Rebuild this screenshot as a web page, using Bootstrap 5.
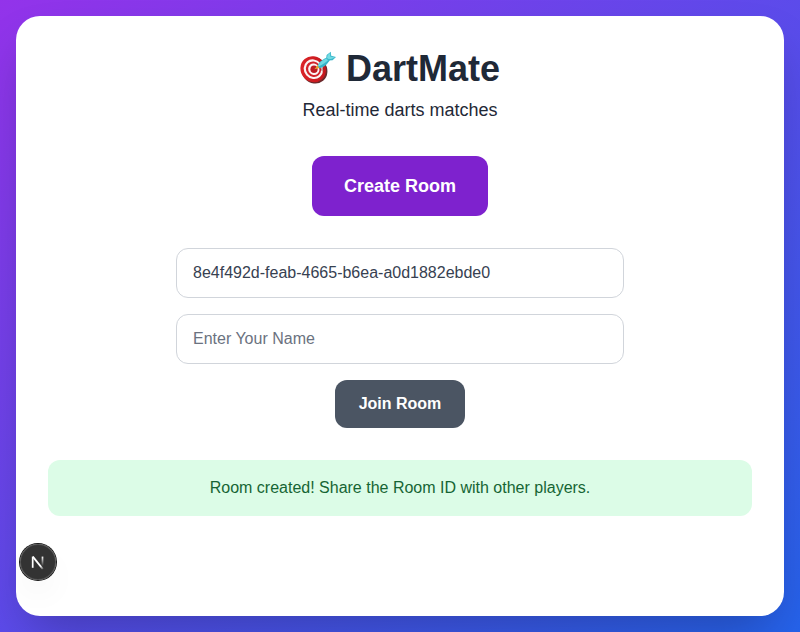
<!DOCTYPE html>
<html lang="en">
<head>
<meta charset="utf-8">
<meta name="viewport" content="width=device-width, initial-scale=1">
<title>DartMate</title>
<link href="https://cdn.jsdelivr.net/npm/bootstrap@5.3.0/dist/css/bootstrap.min.css" rel="stylesheet">
<style>
body { font-family: "Liberation Sans", Arial, sans-serif; color: #1f2937; }
.page { background: linear-gradient(to bottom right, #9333ea, #2563eb); }
.panel { border-radius: 24px; padding: 32px; box-shadow: 0 25px 50px -12px rgba(0,0,0,.25); }
.title { font-size: 36px; line-height: 40px; height: 40px; margin-bottom: 8px; }
.title svg { width: 36px; height: 36px; margin-right: 10px; }
.title span { padding-top: 1px; margin-bottom: -1px; }
.tagline { font-size: 18px; line-height: 28px; margin-bottom: 32px; }
.btn-create { --bs-btn-color: #fff; --bs-btn-bg: #7e22ce; --bs-btn-hover-color: #fff; --bs-btn-hover-bg: #6b21a8; border: 0; border-radius: 12px; padding: 16px 32px; font-size: 18px; line-height: 28px; margin-bottom: 32px; }
.join-form { width: 448px; gap: 16px; margin-bottom: 32px; }
.join-form .form-control { height: 50px; padding: 12px 16px; border-color: #d1d5db; border-radius: 12px; color: #374151; line-height: 24px; }
.join-form .form-control::placeholder { color: #6b7280; }
.btn-join { --bs-btn-color: #fff; --bs-btn-bg: #4b5563; --bs-btn-hover-color: #fff; --bs-btn-hover-bg: #374151; border: 0; border-radius: 12px; padding: 12px 24px; line-height: 24px; }
.notice { background: #dcfce7; color: #166534; border: 0; border-radius: 12px; padding: 16px; line-height: 24px; }
.dev-badge { left: 20px; bottom: 52px; width: 36px; height: 36px; background: rgba(0,0,0,.8); box-shadow: 0 0 0 1px #171717, inset 0 0 0 1px rgba(255,255,255,.14), 0 16px 32px -8px rgba(0,0,0,.1); }
</style>
</head>
<body>
<div class="page vh-100 p-3">
  <main class="panel bg-white h-100 d-flex flex-column align-items-center">
    <h1 class="title fw-bold d-flex align-items-center">
      <svg viewBox="0 0 36 36" aria-hidden="true">
        <defs>
          <linearGradient id="rim" x1="0" y1="0" x2="1" y2="1"><stop offset="0" stop-color="#e0262a"/><stop offset="1" stop-color="#c0141a"/></linearGradient>
        </defs>
        <ellipse cx="14.4" cy="20.4" rx="12.6" ry="13.6" transform="rotate(-40 14.4 20.4)" fill="#6b2a2c"/>
        <ellipse cx="13.2" cy="19.2" rx="12.4" ry="13.3" transform="rotate(-40 13.2 19.2)" fill="url(#rim)"/>
        <ellipse cx="13.4" cy="19.2" rx="9.4" ry="10.2" transform="rotate(-40 13.4 19.2)" fill="#fbf3f3"/>
        <ellipse cx="13.5" cy="19.2" rx="7.4" ry="8" transform="rotate(-40 13.5 19.2)" fill="#d2232a"/>
        <ellipse cx="13.8" cy="19.2" rx="5.5" ry="5.9" transform="rotate(-40 13.8 19.2)" fill="#fbf3f3"/>
        <ellipse cx="14" cy="19.2" rx="3.6" ry="3.8" fill="#bd1a22"/>
        <path d="M19 18.5 24.5 18 23 22Z" fill="#8c2525" opacity=".45"/>
        <path d="M14.3 19.2 18.8 14 21.6 17.4Z" fill="#e5a62c"/>
        <path d="M17.8 15.4C19 11.8 23.6 8.6 28 7L30 9.8C28 13.6 24 17.8 19.4 18.2Z" fill="#36b4c9"/>
        <path d="M18.3 15.2C20 11.9 24.5 9 28.4 7.6L29.3 9C26.4 12 22.6 14.7 18.6 16.6Z" fill="#6fd9e2"/>
        <path d="M26.2 8.4 26.6 5 30.8 1.8 31.2 5.8 36 7.1 32.6 10.3 28.2 10.4Z" fill="#3ab6ca"/>
        <path d="M27 8 27.6 5 30.3 2.8 30.2 6.6 35 7.4 31 9.1 28.5 9Z" fill="#73dbe3"/>
      </svg>
      <span>DartMate</span>
    </h1>
    <p class="tagline">Real-time darts matches</p>
    <button type="button" class="btn btn-create fw-bold">Create Room</button>
    <form class="join-form d-flex flex-column align-items-center">
      <input class="form-control" type="text" value="8e4f492d-feab-4665-b6ea-a0d1882ebde0" aria-label="Room ID">
      <input class="form-control" type="text" placeholder="Enter Your Name" aria-label="Your name">
      <button type="button" class="btn btn-join fw-bold">Join Room</button>
    </form>
    <div class="notice alert w-100 text-center" role="status">Room created! Share the Room ID with other players.</div>
  </main>
</div>
<button type="button" class="dev-badge position-fixed rounded-circle border-0 p-0 d-flex align-items-center justify-content-center" aria-label="Developer tools">
  <svg width="36" height="36" viewBox="0 0 36 36" fill="none">
    <defs>
      <linearGradient id="diag" gradientUnits="userSpaceOnUse" x1="18" y1="18" x2="24" y2="25"><stop stop-color="#fff"/><stop offset=".5" stop-color="#fff"/><stop offset="1" stop-color="#fff" stop-opacity=".1"/></linearGradient>
      <linearGradient id="stem" gradientUnits="userSpaceOnUse" x1="22.5" y1="12.5" x2="22.5" y2="22"><stop stop-color="#fff"/><stop offset="1" stop-color="#fff" stop-opacity="0"/></linearGradient>
    </defs>
    <path d="M12.8 12.6 22.8 25" stroke="url(#diag)" stroke-width="1.9"/>
    <path d="M12.7 23.8V12.6" stroke="#fff" stroke-width="1.7"/>
    <path d="M22.5 12.6V22.5" stroke="url(#stem)" stroke-width="1.7"/>
  </svg>
</button>
<script src="https://cdn.jsdelivr.net/npm/bootstrap@5.3.0/dist/js/bootstrap.bundle.min.js"></script>
</body>
</html>
